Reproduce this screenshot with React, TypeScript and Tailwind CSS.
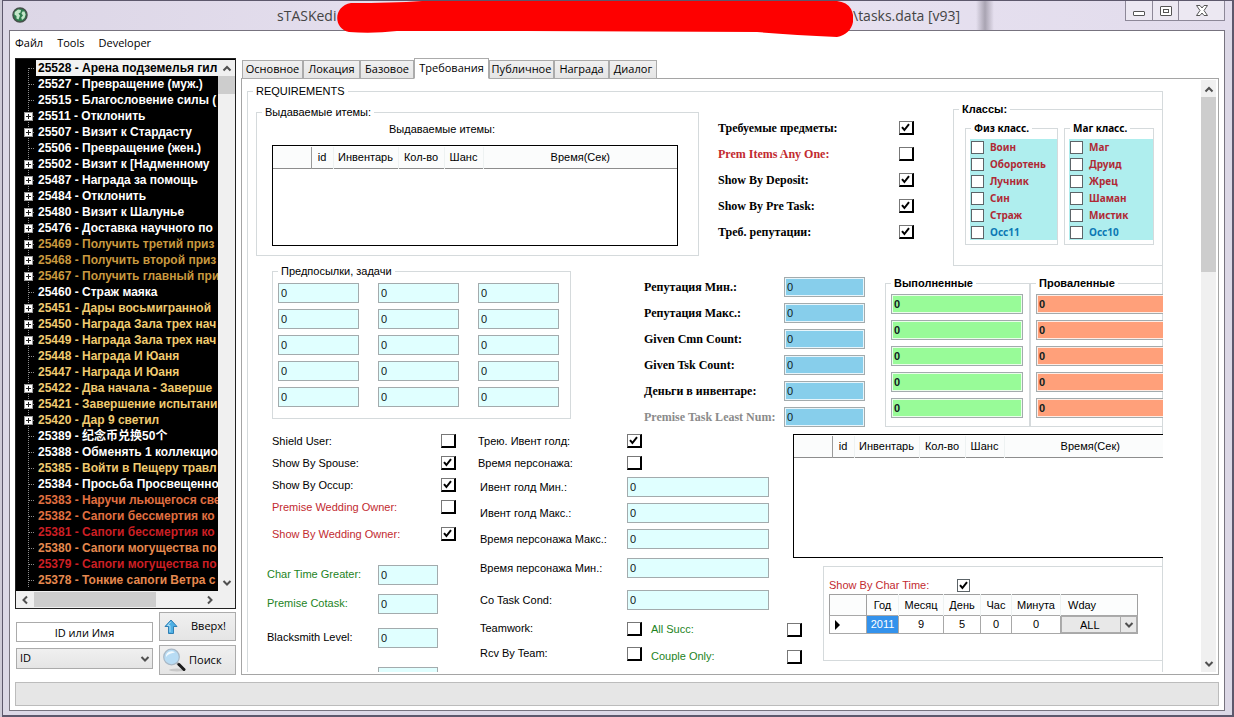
import React, { useId, useState } from "react";
import clsx from "clsx";

/* ---------- shared controls ---------- */

function Chevron({ dir }: { dir: "up" | "down" | "left" | "right" }) {
  const paths = {
    up: "M1.5 7.5 5 4l3.500 3.500",
    down: "M1.500 3 5 6.500 8.500 3",
    left: "M7 1.500 3.500 5 7 8.500",
    right: "M3 1.500 6.500 5 3 8.500",
  };
  return (
    <svg viewBox="0 0 10 10" className="size-[10px]" fill="none" stroke="#505050" strokeWidth="2" aria-hidden="true">
      <path d={paths[dir]} />
    </svg>
  );
}

function CheckBox({ id, checked = false, flat = false, label }: { id?: string; checked?: boolean; flat?: boolean; label?: string }) {
  return (
    <span className="grid shrink-0">
      <input
        id={id}
        type="checkbox"
        defaultChecked={checked}
        aria-label={label}
        className={clsx(
          "peer col-start-1 row-start-1 appearance-none bg-white",
          flat ? "size-[13px] border border-[#5c6468]" : "h-[14px] w-[15px] border border-r-2 border-b-2 border-black border-t-[#777] border-l-[#777]",
        )}
      />
      <svg
        viewBox="0 0 13 13"
        className="pointer-events-none invisible col-start-1 row-start-1 size-[13px] peer-checked:visible"
        fill="none"
        stroke="#000"
        strokeWidth="2"
        aria-hidden="true"
      >
        <path d="M3 6.200 5.400 9 10 3.200" />
      </svg>
    </span>
  );
}

function Group({ title, className, legendClass, children }: { title?: string; className?: string; legendClass?: string; children: React.ReactNode }) {
  return (
    <fieldset className={clsx("min-w-0 shrink-0 border border-[#d5dadc]", className)}>
      {title && <legend className={clsx("ml-[5px] px-[3px] whitespace-nowrap", legendClass ?? "leading-[14px]")}>{title}</legend>}
      {children}
    </fieldset>
  );
}

const tones = {
  aqua: "border-[#a3abad] bg-[#e0ffff]",
  blue: "border-[#a3abad] bg-[#87ceeb] inset-ring inset-ring-white/80",
  green: "border-[#a3abad] bg-[#98fb98] inset-ring inset-ring-white/80 font-bold",
  salmon: "border-[#a3abad] bg-[#ffa07a] inset-ring inset-ring-white/80 font-bold",
};

function Field({ id, tone = "aqua", className, label }: { id?: string; tone?: keyof typeof tones; className: string; label?: string }) {
  return (
    <input
      id={id}
      aria-label={label}
      defaultValue="0"
      className={clsx("h-5 shrink-0 border px-[2px] text-[11px] text-[#102020] outline-none", tones[tone], className)}
    />
  );
}

/* A caption followed by a tick box or a text box. */
function Row({
  text,
  kind,
  height,
  labelClass,
  fieldClass = "",
  tone,
}: {
  text: string;
  kind: "on" | "off" | "field";
  height: string;
  labelClass: string;
  fieldClass?: string;
  tone?: keyof typeof tones;
}) {
  const id = useId();
  return (
    <div className={clsx("flex shrink-0 items-center", height)}>
      <label htmlFor={id} className={clsx("shrink-0 whitespace-nowrap", labelClass)}>
        {text}
      </label>
      {kind === "field" ? <Field id={id} tone={tone} className={fieldClass} /> : <CheckBox id={id} checked={kind === "on"} />}
    </div>
  );
}

/* ---------- task tree ---------- */

const gold = "text-[#c9993f]";
const yellow = "text-[#f0cb70]";
const orange = "text-[#e07040]";
const amber = "text-[#e5894f]";
const red = "text-[#cc1f24]";
const white = "text-white";

const tasks: [string, string, boolean][] = [
  ["25527 - Превращение (муж.)", white, false],
  ["25515 - Благословение силы (", white, false],
  ["25511 - Отклонить", white, true],
  ["25507 - Визит к Стардасту", white, true],
  ["25506 - Превращение (жен.)", white, false],
  ["25502 - Визит к [Надменному", white, true],
  ["25487 - Награда за помощь", white, true],
  ["25484 - Отклонить", white, true],
  ["25480 - Визит к Шалунье", white, true],
  ["25476 - Доставка научного по", white, true],
  ["25469 - Получить третий приз", gold, true],
  ["25468 - Получить второй приз", gold, true],
  ["25467 - Получить главный при", gold, true],
  ["25460 - Страж маяка", white, false],
  ["25451 - Дары восьмигранной", yellow, true],
  ["25450 - Награда Зала трех нач", yellow, true],
  ["25449 - Награда Зала трех нач", yellow, true],
  ["25448 - Награда И Юаня", yellow, false],
  ["25447 - Награда И Юаня", yellow, false],
  ["25422 - Два начала - Заверше", yellow, true],
  ["25421 - Завершение испытани", yellow, true],
  ["25420 - Дар 9 светил", yellow, true],
  ["25389 - 纪念币兑换50个", white, false],
  ["25388 - Обменять 1 коллекцио", white, false],
  ["25385 - Войти в Пещеру травл", yellow, false],
  ["25384 - Просьба Просвещенно", white, false],
  ["25383 - Наручи льющегося све", orange, false],
  ["25382 - Сапоги бессмертия ко", orange, false],
  ["25381 - Сапоги бессмертия ко", red, false],
  ["25380 - Сапоги могущества по", amber, false],
  ["25379 - Сапоги могущества по", red, false],
  ["25378 - Тонкие сапоги Ветра с", amber, false],
];

function Branch({ expandable, first = false }: { expandable: boolean; first?: boolean }) {
  return (
    <svg viewBox="0 0 20 16" className="h-4 w-5 shrink-0" aria-hidden="true">
      <path d={first ? "M12.500 8V16" : "M12.500 0V16"} stroke="#8a8a8a" strokeDasharray="1 1" />
      <path d="M13 8.500H19" stroke="#8a8a8a" strokeDasharray="1 1" />
      {expandable && (
        <>
          <rect x="8.500" y="4.500" width="8" height="8" fill="#fff" stroke="#9a9a9a" />
          <path d="M10 8.500h5M12.500 6v5" stroke="#222" />
        </>
      )}
    </svg>
  );
}

function TaskTree() {
  return (
    <div className="flex min-h-0 flex-1 flex-col border border-[#222] bg-black pt-px">
      <div className="flex min-h-0 flex-1">
        <ul className="min-w-0 flex-1 overflow-hidden text-[12px] leading-4 font-bold whitespace-nowrap">
          <li className="flex h-4">
            <Branch expandable={false} first />
            <span className="flex-1 overflow-hidden bg-[#f2f2f2] pl-[2px] text-black">25528 - Арена подземелья гил</span>
          </li>
          {tasks.map(([text, color, expandable]) => (
            <li key={text} className="flex h-4">
              <Branch expandable={expandable} />
              <span className={clsx("flex-1 pl-[2px]", color)}>{text}</span>
            </li>
          ))}
        </ul>
        <div className="flex w-[17px] flex-col items-center bg-[#f0f0f0]">
          <span className="flex h-4 items-center">
            <Chevron dir="up" />
          </span>
          <span className="h-[18px] w-full bg-[#cdcdcd]" />
          <span className="mt-auto flex h-4 items-center">
            <Chevron dir="down" />
          </span>
        </div>
      </div>
      <div className="flex h-[17px] items-center bg-[#f0f0f0]">
        <span className="flex w-[18px] justify-center">
          <Chevron dir="left" />
        </span>
        <span className="h-[15px] w-[122px] bg-[#cdcdcd]" />
        <span className="mr-[20px] ml-auto">
          <Chevron dir="right" />
        </span>
      </div>
    </div>
  );
}

function SearchPanel() {
  return (
    <div className="mt-[3px] grid shrink-0 grid-cols-[137px_1fr] gap-x-[6px] pl-px font-['Open_Sans',sans-serif] text-[11px]">
      <div className="flex flex-col gap-[6px] pt-[10px]">
        <input aria-label="ID или Имя" defaultValue="ID или Имя" className="h-5 w-full border border-[#ababab] bg-white text-center outline-none" />
        <div className="grid">
          <select
            aria-label="Поле поиска"
            className="col-start-1 row-start-1 h-[21px] w-full appearance-none border border-[#ababab] bg-linear-to-b from-[#f0f0f0] to-[#e5e5e5] pl-[3px]"
          >
            <option>ID</option>
          </select>
          <span className="pointer-events-none col-start-1 row-start-1 mr-[3px] self-center justify-self-end">
            <Chevron dir="down" />
          </span>
        </div>
      </div>
      <div className="flex flex-col gap-1">
        <button className="flex h-[29px] items-center border border-[#ababab] bg-linear-to-b from-[#f0f0f0] to-[#e5e5e5] pl-1">
          <svg viewBox="0 0 14 16" className="h-4 w-[14px]" aria-hidden="true">
            <path d="M7 1 13 7.500H9.500V14.500H4.500V7.500H1Z" fill="#4fb0e4" stroke="#2f7fb4" strokeLinejoin="round" />
            <path d="M6.800 2.800 3.500 6.500H6V13" fill="none" stroke="#a8dcf6" />
          </svg>
          <span className="flex-1 pl-[4px]">Вверх!</span>
        </button>
        <button className="flex h-[30px] items-center border border-[#ababab] bg-linear-to-b from-[#f0f0f0] to-[#e5e5e5] pl-[2px]">
          <svg viewBox="0 0 24 24" className="size-6" aria-hidden="true">
            <ellipse cx="15" cy="22" rx="8" ry="1.500" fill="#c8c8c8" />
            <path d="m15 15 2.500 2" stroke="#999" strokeWidth="2.500" />
            <path d="m17 16.500 5 5" stroke="#1c1c1c" strokeWidth="3" strokeLinecap="round" />
            <circle cx="9.500" cy="9" r="7.800" fill="#b8dcf4" stroke="#a9b8c6" strokeWidth="1.200" />
            <path d="M4 9a5.500 5.500 0 0 1 9-4.500C10 5 6 6 4 9Z" fill="#f4fbff" />
          </svg>
          <span className="pl-[3px]">Поиск</span>
        </button>
      </div>
    </div>
  );
}

/* ---------- requirements page ---------- */

function ItemTable({ size, name }: { size: string; name: string }) {
  return (
    <div className={clsx("shrink-0 border border-black bg-white pt-px", size)}>
      <table aria-label={name} className="w-full table-fixed border-collapse">
        <thead>
          <tr className="h-[21px] border-b border-[#8d8d8d] bg-[#fbfcfc]">
            <th className="w-[38px] border-r border-[#9a9a9a]" />
            <th className="w-[22px] border-r border-[#eef2f2] font-normal">id</th>
            <th className="w-[65px] border-r border-[#eef2f2] font-normal">Инвентарь</th>
            <th className="w-[46px] border-r border-[#eef2f2] font-normal">Кол-во</th>
            <th className="w-[39px] border-r border-[#eef2f2] font-normal">Шанс</th>
            <th className="font-normal">Время(Сек)</th>
          </tr>
        </thead>
      </table>
    </div>
  );
}

function ClassGroup({ title, names, width }: { title: string; names: string[]; width: string }) {
  const base = useId();
  return (
    <Group title={title} className={clsx("h-[124px]", width)} legendClass="leading-[14px] text-[10px] font-bold">
      <ul className="mt-[4px] ml-1 h-[101px] bg-[#afeeee] pl-px text-[10px] font-bold">
        {names.map((n, i) => (
          <li key={n} className="flex h-[17px] items-center gap-[6px]">
            <CheckBox flat id={base + i} />
            <label htmlFor={base + i} className={n.startsWith("Occ") ? "text-[#0b78b4]" : "text-[#b02a35]"}>
              {n}
            </label>
          </li>
        ))}
      </ul>
    </Group>
  );
}

const serif = "font-['Liberation_Serif',serif] font-bold text-[12px]";

function TopBand() {
  const rows: [string, "on" | "off", string][] = [
    ["Требуемые предметы:", "on", ""],
    ["Prem Items Any One:", "off", "text-[#c22a30]"],
    ["Show By Deposit:", "on", ""],
    ["Show By Pre Task:", "on", ""],
    ["Треб. репутации:", "on", ""],
  ];
  return (
    <div className="flex h-[167px] items-start">
      <Group title="Выдаваемые итемы:" className="mt-[7px] ml-2 h-[151px] w-[443px]">
        <div className="pl-[15px]">
          <p className="h-[26px] pt-[3px] pl-[117px] leading-[14px]">Выдаваемые итемы:</p>
          <ItemTable size="h-[101px] w-[406px]" name="Выдаваемые итемы" />
        </div>
      </Group>
      <div className="mt-[17px] ml-[19px] flex w-[235px] shrink-0 flex-col">
        {rows.map(([text, kind, color]) => (
          <Row key={text} text={text} kind={kind} height="h-[26px]" labelClass={clsx("w-[181px]", serif, color)} />
        ))}
      </div>
      <Group title="Классы:" className="mt-[4px] h-[164px] w-[260px]" legendClass="leading-[14px] font-bold">
        <div className="flex gap-[6px] pt-[5px] pl-[11px] font-['Noto_Sans',sans-serif]">
          <ClassGroup title="Физ класс." width="w-[93px]" names={["Воин", "Оборотень", "Лучник", "Син", "Страж", "Occ11"]} />
          <ClassGroup title="Маг класс." width="w-[90px]" names={["Маг", "Друид", "Жрец", "Шаман", "Мистик", "Occ10"]} />
        </div>
      </Group>
    </div>
  );
}

function ResultGroup({ title, tone }: { title: string; tone: "green" | "salmon" }) {
  return (
    <Group title={title} className="mt-[11px] h-[151px] w-[145px]" legendClass="leading-[14px] text-[11px] font-bold">
      <div className="flex flex-col gap-[6px] pt-[4px] pl-[5px]">
        {[1, 2, 3, 4, 5].map((n) => (
          <Field key={n} tone={tone} className="w-[132px]" label={`${title} ${n}`} />
        ))}
      </div>
    </Group>
  );
}

function MiddleBand() {
  const rows = ["Репутация Мин.:", "Репутация Макс.:", "Given Cmn Count:", "Given Tsk Count:", "Деньги в инвентаре:"];
  return (
    <div className="flex h-[165px] items-start">
      <Group title="Предпосылки, задачи" className="ml-6 h-[154px] w-[299px]" legendClass="leading-[12px]">
        <div className="grid grid-cols-[repeat(3,81px)] gap-x-[19px] gap-y-[6px] pt-[6px] pl-[5px]">
          {Array.from({ length: 15 }, (_, i) => (
            <Field key={i} className="w-[81px]" label={`Задача ${i + 1}`} />
          ))}
        </div>
      </Group>
      <div className="mt-[9px] ml-[73px] flex w-[241px] shrink-0 flex-col">
        {rows.map((text) => (
          <Row key={text} text={text} kind="field" tone="blue" height="h-[26px]" labelClass={clsx("w-[140px]", serif)} fieldClass="w-[81px]" />
        ))}
        <Row
          text="Premise Task Least Num:"
          kind="field"
          tone="blue"
          height="h-[26px]"
          labelClass={clsx("w-[140px] text-[#8b8b8b]", serif)}
          fieldClass="w-[81px]"
        />
      </div>
      <ResultGroup title="Выполненные" tone="green" />
      <ResultGroup title="Проваленные" tone="salmon" />
    </div>
  );
}

function LeftColumn() {
  const check = "w-[169px]";
  const field = "w-[111px]";
  return (
    <div className="flex w-[222px] shrink-0 flex-col pl-[19px]">
      <div className="flex flex-col pl-[5px]">
        <Row text="Shield User:" kind="off" height="h-[22px]" labelClass={check} />
        <Row text="Show By Spouse:" kind="on" height="h-[22px]" labelClass={check} />
        <Row text="Show By Occup:" kind="on" height="h-[22px]" labelClass={check} />
        <Row text="Premise Wedding Owner:" kind="off" height="h-[22px]" labelClass={clsx(check, "text-[#c22a30]")} />
        <Row text="Show By Wedding Owner:" kind="on" height="h-[32px]" labelClass={clsx(check, "text-[#c22a30]")} />
      </div>
      <div className="mt-[10px] flex flex-col">
        <Row text="Char Time Greater:" kind="field" height="h-[29px]" labelClass={clsx(field, "text-[#1d831d]")} fieldClass="w-[60px]" />
        <Row text="Premise Cotask:" kind="field" height="h-[29px]" labelClass={clsx(field, "text-[#1d831d]")} fieldClass="w-[60px]" />
        <Row text="Blacksmith Level:" kind="field" height="h-[39px]" labelClass={field} fieldClass="w-[60px]" />
        <Row text="" kind="field" height="h-[39px]" labelClass={field} fieldClass="w-[60px]" />
      </div>
    </div>
  );
}

function CenterColumn() {
  const label = "w-[147px]";
  return (
    <div className="flex w-[323px] shrink-0 flex-col pl-[10px]">
      <Row text="Трею. Ивент голд:" kind="on" height="h-[22px]" labelClass="-ml-[2px] w-[149px]" />
      <Row text="Время персонажа:" kind="off" height="h-[22px]" labelClass="-ml-[2px] w-[149px]" />
      <Row text="Ивент голд Мин.:" kind="field" height="h-[26px]" labelClass={label} fieldClass="w-[142px]" />
      <Row text="Ивент голд Макс.:" kind="field" height="h-[26px]" labelClass={label} fieldClass="w-[142px]" />
      <Row text="Время персонажа Макс.:" kind="field" height="h-[26px]" labelClass={label} fieldClass="w-[142px]" />
      <Row text="Время персонажа Мин.:" kind="field" height="h-[32px]" labelClass={label} fieldClass="w-[142px]" />
      <Row text="Co Task Cond:" kind="field" height="h-[32px]" labelClass={label} fieldClass="w-[142px]" />
      <div className="flex">
        <div className="flex w-[171px] shrink-0 flex-col">
          <Row text="Teamwork:" kind="off" height="h-[25px]" labelClass={label} />
          <Row text="Rcv By Team:" kind="off" height="h-[25px]" labelClass={label} />
          <Row text="" kind="off" height="h-[25px]" labelClass={label} />
        </div>
        <div className="flex shrink-0 flex-col">
          <Row text="All Succ:" kind="off" height="h-[27px]" labelClass="w-[136px] text-[#1d831d]" />
          <Row text="Couple Only:" kind="off" height="h-[27px]" labelClass="w-[136px] text-[#1d831d]" />
        </div>
      </div>
    </div>
  );
}

function TimeTable() {
  const cell = "border border-[#a8a8a8] text-center";
  const head = "border-r border-[#eef2f2] font-normal";
  return (
    <table aria-label="Show By Char Time" className="w-[309px] table-fixed border-collapse border border-[#a0a0a0]">
      <thead>
        <tr className="h-[21px] bg-[#fcfdfd]">
          <th className="w-[37px] border-r border-[#a0a0a0]" />
          <th className={clsx("w-[32px]", head)}>Год</th>
          <th className={clsx("w-[45px]", head)}>Месяц</th>
          <th className={clsx("w-[37px]", head)}>День</th>
          <th className={clsx("w-[31px]", head)}>Час</th>
          <th className={clsx("w-[49px]", head)}>Минута</th>
          <th className="pl-[7px] text-left font-normal">Wday</th>
        </tr>
      </thead>
      <tbody>
        <tr className="h-[18px] text-[11px]">
          <td className="border border-[#a8a8a8] pl-[5px]">
            <svg viewBox="0 0 5 10" className="h-[10px] w-[5px]" aria-hidden="true">
              <path d="M0 0 5 5 0 10Z" />
            </svg>
          </td>
          <td className={clsx(cell, "bg-[#3392ec] text-white")}>2011</td>
          <td className={cell}>9</td>
          <td className={cell}>5</td>
          <td className={cell}>0</td>
          <td className={cell}>0</td>
          <td className="border border-[#a8a8a8] p-0">
            <div className="grid">
              <select aria-label="Wday" className="col-start-1 row-start-1 h-[17px] w-full appearance-none border border-[#ababab] bg-[#e8e8e8] pl-[18px] text-[11px]">
                <option>ALL</option>
              </select>
              <span className="pointer-events-none col-start-1 row-start-1 flex h-[17px] w-[17px] items-center justify-center self-center justify-self-end border-l border-[#ababab]">
                <Chevron dir="down" />
              </span>
            </div>
          </td>
        </tr>
      </tbody>
    </table>
  );
}

function RightColumn() {
  const id = useId();
  return (
    <div className="flex shrink-0 flex-col items-start pt-[4px]">
      <ItemTable size="h-[124px] w-[384px]" name="Предметы" />
      <Group className="mt-[8px] ml-[30px] h-[95px] w-[400px]">
        <div className="flex h-[27px] items-center pt-[10px] pl-[5px]">
          <label htmlFor={id} className="w-[128px] text-[#c22a30]">
            Show By Char Time:
          </label>
          <CheckBox flat checked id={id} />
        </div>
        <div className="pl-[5px]">
          <TimeTable />
        </div>
      </Group>
    </div>
  );
}

function Requirements() {
  return (
    <div className="min-h-0 min-w-0 flex-1 overflow-hidden">
      <Group title="REQUIREMENTS" className="mt-[4px] h-[640px]">
        <TopBand />
        <MiddleBand />
        <div className="flex items-start">
          <LeftColumn />
          <CenterColumn />
          <RightColumn />
        </div>
      </Group>
    </div>
  );
}

/* ---------- window ---------- */

const tabs: [string, string][] = [
  ["Основное", "w-[61px]"],
  ["Локация", "w-[57px]"],
  ["Базовое", "w-[54px]"],
  ["Требования", "w-[75px]"],
  ["Публичное", "w-[65px]"],
  ["Награда", "w-[55px]"],
  ["Диалог", "w-[48px]"],
];

function TitleBar() {
  return (
    <header className="relative flex h-[29px] shrink-0 bg-linear-to-r from-[#dcd6e6] via-[#e9e3f2] to-[#e2dcec]">
      <svg viewBox="0 0 16 16" className="absolute top-[6px] left-[9px] size-4" aria-hidden="true">
        <circle cx="8" cy="8" r="7" fill="#2f7d4f" stroke="#45504a" strokeWidth="1.500" />
        <path
          d="M2.800 5 6 2.500 9 3 8.500 5.500 6.500 6.500 8 8.500 6.500 12.500 4.500 11.500 4.500 9 2.500 7.500ZM10.500 4.500 12.500 4.500 13.600 7.500 12.500 11 10 13 9.200 10.500 11 8.500 9.500 6.500Z"
          fill="#c4e6c9"
        />
      </svg>
      <h1 className="flex h-full items-center pl-[274px] font-['Open_Sans',sans-serif] text-[14px] text-[#444]">
        <span className="w-[60px] whitespace-nowrap">sTASKedi</span>
        <svg viewBox="0 0 516 38" className="relative z-10 h-[38px] w-[516px] shrink-0 self-start" aria-hidden="true">
          <path
            d="M14 2C-4 5-4 28 12 31Q35 33 60 30H190L420 31Q455 34 500 36C514 34 520 20 514 8Q510 1 500 0H85Q55 2 14 2Z"
            fill="#fe0000"
          />
        </svg>
        <span className="whitespace-nowrap">\tasks.data [v93]</span>
      </h1>
      <span className="ml-4 w-[18px] shrink-0 bg-linear-to-r from-transparent via-[#a9a4b2] to-transparent" />
      <div className="mr-[7px] ml-auto flex h-5 border border-t-0 border-[#8d8898] bg-[#ece8f2]">
        <button aria-label="Свернуть" className="flex w-[27px] items-end justify-center border-r border-[#8d8898] pb-[4px]">
          <svg viewBox="0 0 12 5" className="h-[5px] w-3" aria-hidden="true">
            <rect x="0.500" y="0.500" width="11" height="4" rx="0.500" fill="#fff" stroke="#555" />
          </svg>
        </button>
        <button aria-label="Развернуть" className="flex w-[26px] items-center justify-center border-r border-[#8d8898]">
          <svg viewBox="0 0 12 10" className="h-[10px] w-3" aria-hidden="true">
            <rect x="0.500" y="0.500" width="11" height="9" rx="0.500" fill="#fff" stroke="#555" />
            <rect x="3.500" y="3.500" width="5" height="3" fill="#fff" stroke="#555" />
          </svg>
        </button>
        <button aria-label="Закрыть" className="flex w-[45px] items-center justify-center">
          <svg viewBox="0 0 12 11" className="h-[11px] w-3" aria-hidden="true">
            <path d="M.5.5H4L6 3 8 .5h3.500L8 5.500l3.500 5H8L6 8 4 10.500H.5L4 5.500Z" fill="#fff" stroke="#555" strokeLinejoin="round" />
          </svg>
        </button>
      </div>
    </header>
  );
}

export default function App() {
  const [active, setActive] = useState("Требования");
  return (
    <div className="h-screen overflow-hidden bg-[#cfcbd8] pl-[2px] font-['Liberation_Sans',Arial,'Noto_Sans_CJK_SC',sans-serif] text-[11px] text-black">
      <div className="flex h-full flex-col border border-r-2 border-b-2 border-[#5d586c] bg-[#dcd8e6]">
        <TitleBar />
        <div className="mr-[7px] mb-[4px] ml-[6px] flex min-h-0 flex-1 flex-col border border-[#77737f] bg-white">
          <nav className="flex h-[25px] shrink-0 items-center gap-[14px] pl-[5px] font-['Open_Sans',sans-serif] text-[11px]">
            <button>Файл</button>
            <button>Tools</button>
            <button>Developer</button>
          </nav>
          <main className="flex min-h-0 flex-1 gap-[5px] pt-[2px] pr-[5px] pl-[5px]">
            <aside className="flex w-[221px] shrink-0 flex-col">
              <TaskTree />
              <SearchPanel />
            </aside>
            <section className="flex min-w-0 flex-1 flex-col">
              <div role="tablist" className="relative z-10 -mb-px flex h-[21px] shrink-0 items-end pl-px font-['Open_Sans',sans-serif] text-[11px]">
                {tabs.map(([name, width]) => (
                  <button
                    key={name}
                    role="tab"
                    aria-selected={active === name}
                    onClick={() => setActive(name)}
                    className={clsx(
                      "border whitespace-nowrap",
                      width,
                      active === name
                        ? "h-[21px] border-[#ababab] border-b-white bg-white"
                        : "h-[19px] border-[#ababab] bg-linear-to-b from-[#f0f0f0] to-[#e5e5e5]",
                    )}
                  >
                    {name}
                  </button>
                ))}
              </div>
              <div className="flex min-h-0 flex-1 border border-[#a5a5a5] pt-px pr-[2px] pb-[2px] pl-[5px]">
                <Requirements />
                <div className="ml-[38px] flex w-[15px] flex-col items-center bg-[#f0f0f0]">
                  <span className="flex h-[17px] items-center">
                    <Chevron dir="up" />
                  </span>
                  <span className="h-[175px] w-full bg-[#cdcdcd]" />
                  <span className="mt-auto flex h-[17px] items-center">
                    <Chevron dir="down" />
                  </span>
                </div>
              </div>
            </section>
          </main>
          <footer className="mx-[5px] mt-[7px] mb-[4px] h-[24px] shrink-0 border border-[#bcbcbc] bg-[#e6e6e6]" />
        </div>
      </div>
    </div>
  );
}
